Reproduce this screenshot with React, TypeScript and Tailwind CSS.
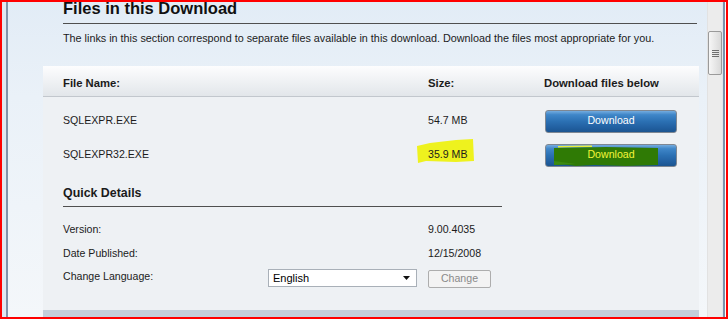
import React from "react";

type FileRow = { name: string; size: string; marked?: boolean };

const files: FileRow[] = [
  { name: "SQLEXPR.EXE", size: "54.7 MB" },
  { name: "SQLEXPR32.EXE", size: "35.9 MB", marked: true },
];

const DownloadButton: React.FC<{ marked?: boolean }> = ({ marked }) => (
  <button className="relative ml-[1px] flex h-[23px] w-[132px] items-center justify-center rounded-[3px] border border-[#7e8792] bg-[linear-gradient(to_bottom,#74acdf_0%,#3f86c8_18%,#2b70b3_50%,#215fa0_80%,#1b5590_100%)] text-[10.6px] text-white">
    {marked && (
      <svg className="absolute left-0 top-0" width="132" height="23" viewBox="0 0 132 23">
        <path d="M12 1 L46 0.5 L46 2 L12 2.5 Z" fill="#e8ef3a" />
        <path
          d="M8 3 L60 2 L112 3 L112 20 L80 21 L48 20 L30 21 L18 19.5 L8 20 Z"
          fill="#2f7a05"
        />
        <path d="M8 16 L30 19 L8 20 Z" fill="#3c8a10" />
      </svg>
    )}
    <span className={`relative ${marked ? "text-[#f4f53a]" : "text-white"}`}>Download</span>
  </button>
);

export default function App() {
  return (
    <div className="flex h-[319px] w-[728px] overflow-hidden border-2 border-[#ff0000] font-['Liberation_Sans',Arial,sans-serif] text-[10.6px] text-[#1b1b1b]">
      <div className="w-[4px] bg-[#e0e8f1]" />
      <div className="w-[2px] bg-[#8193a9]" />

      <main className="flex w-[699px] flex-col bg-[linear-gradient(to_bottom,#e2ecf6_0%,#eaf1f8_30%,#f4f7fa_100%)]">
        <div className="pl-[55px] pr-[10px]">
          <h1 className="-mt-[4px] border-b border-[#4f4f4f] pb-[4px] text-[16.5px] font-bold leading-[21px] text-[#111]">
            Files in this Download
          </h1>
          <p className="flex h-[29px] items-center text-[10.8px]">
            The links in this section correspond to separate files available in this download. Download the files most
            appropriate for you.
          </p>
        </div>

        <section className="ml-[35px] mr-[8px] mt-[13px] flex flex-1 flex-col bg-[#eef1f4]">
          <div className="grid h-[31px] grid-cols-[365px_116px_1fr] items-center border-b border-[#c2c7cd] bg-[linear-gradient(to_bottom,#fdfdfe,#e2e6ea)] pl-[20px] pt-[4px] text-[11.3px] font-bold">
            <span>File Name:</span>
            <span>Size:</span>
            <span>Download files below</span>
          </div>

          <div className="pt-[7px]">
            {files.map((f) => (
              <div key={f.name} className="grid h-[34px] grid-cols-[365px_116px_1fr] items-center pl-[20px]">
                <span>{f.name}</span>
                <span className="relative">
                  {f.marked && (
                    <svg className="absolute -left-[12px] -top-[8px]" width="60" height="25" viewBox="0 0 60 25">
                      <path d="M1 7 L14 4 L40 1 L57 0 L58 22 L40 23 L10 22 L2 24 Z" fill="#eef21e" />
                    </svg>
                  )}
                  <span className="relative">{f.size}</span>
                </span>
                <DownloadButton marked={f.marked} />
              </div>
            ))}
          </div>

          <h2 className="mx-[20px] mt-[14px] w-[439px] border-b border-[#4f4f4f] pb-[6px] text-[12.4px] font-bold leading-[14px]">
            Quick Details
          </h2>

          <div className="mt-[11px]">
            <div className="grid h-[24px] grid-cols-[365px_1fr] items-center pl-[20px]">
              <span>Version:</span>
              <span>9.00.4035</span>
            </div>
            <div className="grid h-[24px] grid-cols-[365px_1fr] items-center pl-[20px]">
              <span>Date Published:</span>
              <span>12/15/2008</span>
            </div>
            <div className="grid h-[24px] grid-cols-[365px_1fr] items-center pl-[20px]">
              <div className="flex items-center">
                <span className="-mt-[2px] w-[205px]">Change Language:</span>
                <div className="flex h-[18px] w-[149px] items-center justify-between border border-[#a9b0b8] bg-white pl-[4px] pr-[6px] text-[11px] text-black">
                  <span>English</span>
                  <svg width="7" height="4" viewBox="0 0 7 4">
                    <path d="M0 0 H7 L3.5 4 Z" fill="#111" />
                  </svg>
                </div>
              </div>
              <button className="mt-[2px] flex h-[18px] w-[63px] items-center justify-center rounded-[2px] border border-[#adadad] bg-[#f3f3f3] text-[10.6px] text-[#8a8a8a]">
                Change
              </button>
            </div>
          </div>

          <div className="flex-1" />
          <div className="h-[7px] bg-[#c4cfdb]" />
        </section>
      </main>

      <div className="flex w-[15px] flex-col border-l border-[#e2e2e2] bg-[#ececec]">
        <div className="mt-[29px] flex h-[44px] w-[14px] flex-col items-center justify-center gap-[1px] rounded-[2px] border border-[#9a9a9a] bg-[linear-gradient(to_right,#f6f6f6,#d9d9d9)]">
          <div className="h-px w-[7px] bg-[#6e6e6e]" />
          <div className="h-px w-[7px] bg-[#6e6e6e]" />
          <div className="h-px w-[7px] bg-[#6e6e6e]" />
          <div className="h-px w-[7px] bg-[#6e6e6e]" />
        </div>
      </div>
      <div className="w-px bg-[#dfe6ee]" />
      <div className="w-[2px] bg-[#7d91aa]" />
    </div>
  );
}
